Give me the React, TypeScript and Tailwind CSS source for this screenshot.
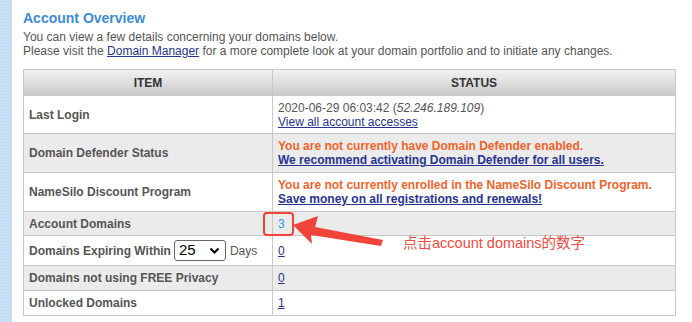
import React from 'react'

const rows = [
  { label: 'Last Login', h: 'h-[38px]', bg: 'bg-white', kind: 'login' },
  { label: 'Domain Defender Status', h: 'h-[39px]', bg: 'bg-[#ebebeb]', kind: 'defender' },
  { label: 'NameSilo Discount Program', h: 'h-[39px]', bg: 'bg-white', kind: 'discount' },
  { label: 'Account Domains', h: 'h-[24px]', bg: 'bg-[#ebebeb]', kind: 'count', value: '3' },
  { label: 'Domains Expiring Within', h: 'h-[30px]', bg: 'bg-white', kind: 'expiring', value: '0' },
  { label: 'Domains not using FREE Privacy', h: 'h-[25px]', bg: 'bg-[#ebebeb]', kind: 'num', value: '0' },
  { label: 'Unlocked Domains', h: 'h-[25px]', bg: 'bg-white', kind: 'num', value: '1' },
]

const link = 'text-[#27338f] underline'

function Status({ kind, value }: { kind: string; value?: string }) {
  if (kind === 'login')
    return (
      <div className="leading-[14px]">
        <div className="text-[#555]">
          2020-06-29 06:03:42 (<i>52.246.189.109</i>)
        </div>
        <a className={link}>View all account accesses</a>
      </div>
    )
  if (kind === 'defender')
    return (
      <div className="leading-[14px] font-bold">
        <div className="text-[#f2642a]">You are not currently have Domain Defender enabled.</div>
        <a className={link}>We recommend activating Domain Defender for all users.</a>
      </div>
    )
  if (kind === 'discount')
    return (
      <div className="leading-[14px] font-bold">
        <div className="text-[#f2642a]">You are not currently enrolled in the NameSilo Discount Program.</div>
        <a className={link}>Save money on all registrations and renewals!</a>
      </div>
    )
  if (kind === 'count') return <a className="text-[#1f9be3]">{value}</a>
  return <a className={link}>{value}</a>
}

export default function App() {
  return (
    <div className="relative flex h-[322px] w-[692px] bg-white font-['Liberation_Sans',Arial,sans-serif] text-[12px] overflow-hidden">
      <div className="w-[12px] h-full bg-[#c9dff6] bg-[radial-gradient(#b9d3f0_1px,transparent_1px)] bg-[length:3px_3px]" />
      <div className="pl-[11px] pt-[9px]">
        <h1 className="text-[14px] leading-[18px] font-bold text-[#3d8bd6]">Account Overview</h1>
        <p className="mt-[3px] leading-[14px] text-[#555] whitespace-nowrap">
          You can view a few details concerning your domains below.
          <br />
          Please visit the <a className="text-[#27338f] underline">Domain Manager</a> for a more complete look at your domain portfolio and to initiate any changes.
        </p>
        <table className="mt-[11px] w-[653px] table-fixed border-collapse border border-[#c8c8c8] whitespace-nowrap">
          <thead>
            <tr className="h-[26px] bg-gradient-to-b from-[#f2f2f2] to-[#c9c9c9]">
              <th className="w-[249px] border border-[#c8c8c8] font-bold text-[#333]">ITEM</th>
              <th className="border border-[#c8c8c8] font-bold text-[#333]">STATUS</th>
            </tr>
          </thead>
          <tbody>
            {rows.map((r) => (
              <tr key={r.label} className={`${r.h} ${r.bg}`}>
                <td className="border border-[#c8c8c8] pl-[5px] font-bold text-[#555]">
                  {r.kind === 'expiring' ? (
                    <div className="flex items-center">
                      <span>{r.label}</span>
                      <div className="ml-[3px] flex h-[21px] w-[52px] items-center justify-between rounded-[3px] border border-[#666] bg-white pl-[4px] pr-[5px] text-[15px] font-normal text-black">
                        <span>25</span>
                        <svg width="11" height="8" viewBox="0 0 11 8">
                          <path d="M1.5 1.5 L5.5 5.5 L9.5 1.5" fill="none" stroke="#000" strokeWidth="2" />
                        </svg>
                      </div>
                      <span className="ml-[4px] font-normal">Days</span>
                    </div>
                  ) : (
                    r.label
                  )}
                </td>
                <td className="border border-[#c8c8c8] pl-[5px]">
                  <Status kind={r.kind} value={r.value} />
                </td>
              </tr>
            ))}
          </tbody>
        </table>
      </div>

      {/* annotation */}
      <div className="absolute left-[263px] top-[212px] h-[24px] w-[31px] rounded-[4px] border-[2.5px] border-[#f04438]" />
      <svg className="absolute left-0 top-0" width="692" height="322">
        <polygon
          points="293,225 318,216 315,227 383,240 381,246 311,235 312,244"
          fill="#f04438"
        />
      </svg>
      <div className="absolute left-[403px] top-[233px] text-[14.5px] leading-[20px] text-[#f04a3e] font-['Liberation_Sans','Noto_Sans_CJK_SC',sans-serif]">
        点击account domains的数字
      </div>
    </div>
  )
}
